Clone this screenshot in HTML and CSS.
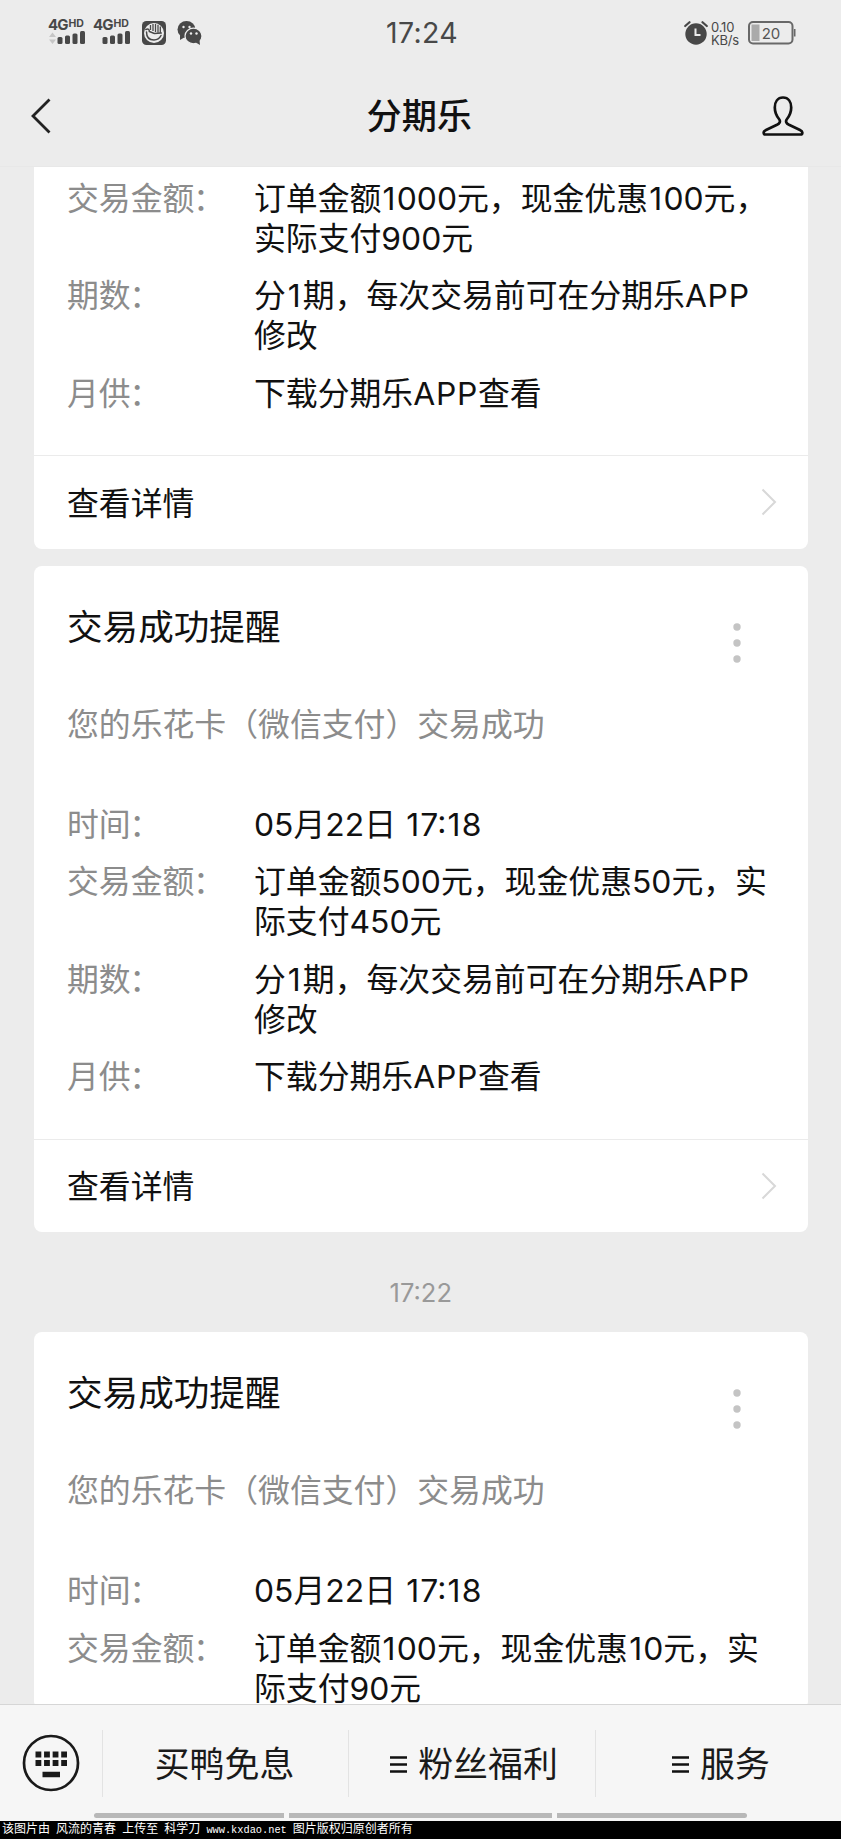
FILE: index.html
```
<!DOCTYPE html>
<html lang="zh-CN">
<head>
<meta charset="utf-8">
<title>分期乐</title>
<link rel="stylesheet" href="styles.css">
</head>
<body>
<div class="screen">
  <header class="statusbar">
    <div class="status-left">
      <div class="signal">
        <div class="net">4G<span class="hd">HD</span></div>
        <svg width="38" height="14" viewBox="0 0 38 14"><path d="M1 6l3.500-4.500L8 6zM1 8.500h7L4.500 13z" fill="#c6c6c6"/><g fill="#484848"><rect x="9.500" y="6" width="5" height="7" rx="1.500"/><rect x="17" y="4.500" width="5" height="8.500" rx="1.500"/><rect x="24.500" y="2.500" width="5" height="10.500" rx="1.500"/><rect x="32" y="0" width="5" height="13" rx="1.500"/></g></svg>
      </div>
      <div class="signal">
        <div class="net">4G<span class="hd">HD</span></div>
        <svg width="38" height="14" viewBox="0 0 38 14"><g fill="#484848"><rect x="9.500" y="6" width="5" height="7" rx="1.500"/><rect x="17" y="4.500" width="5" height="8.500" rx="1.500"/><rect x="24.500" y="2.500" width="5" height="10.500" rx="1.500"/><rect x="32" y="0" width="5" height="13" rx="1.500"/></g></svg>
      </div>
      <svg class="hand" width="24" height="24" viewBox="0 0 24 24"><rect width="24" height="24" rx="4.500" fill="#484848"/><circle cx="12" cy="12" r="10" fill="#ededed"/><path d="M8.500 4v5M11 3v7M13.500 3v8M16 3.800v8M18.300 5.500v6.500" stroke="#484848" stroke-width="1.300"/><path d="M3.800 8.500c2.500-1.200 3.700 0 3.500 2l5 2 7-.5M4.500 11c0 6 3.500 8 7.500 8 3.500 0 5.500-1.500 7-4.500" fill="none" stroke="#484848" stroke-width="1.500" stroke-linecap="round"/></svg>
      <svg class="wechat" width="26" height="24" viewBox="0 0 26 24"><g fill="#484848"><ellipse cx="9.500" cy="8.500" rx="9" ry="8.500"/><path d="M3 14v5l5-3z"/><ellipse cx="16.500" cy="15" rx="8.500" ry="7.800" stroke="#ededed" stroke-width="1.200"/><path d="M18 21l5 3-.5-5z"/></g><g fill="#ededed"><circle cx="6.500" cy="6" r="1.200"/><circle cx="12.500" cy="6" r="1.200"/><circle cx="14" cy="12.500" r="1.200"/><circle cx="19.500" cy="12.500" r="1.200"/></g></svg>
    </div>
    <div class="clock">17:24</div>
    <div class="status-right">
      <svg width="24" height="24" viewBox="0 0 24 24"><circle cx="12" cy="13" r="10.700" fill="#484848"/><path d="M1.200 5L5.500 1.200M22.800 5L18.500 1.200" stroke="#484848" stroke-width="2.200" stroke-linecap="round"/><path d="M11.500 7.500v6.500h5" fill="none" stroke="#ededed" stroke-width="2"/></svg>
      <div class="speed"><span>0.10</span><span>KB/s</span></div>
      <svg width="48" height="24" viewBox="0 0 48 24"><rect x="1" y="1" width="43.500" height="21.500" rx="4" fill="none" stroke="#686868" stroke-width="2"/><rect x="3.500" y="3.500" width="8" height="16.500" fill="#aaa"/><path d="M46.700 8v7.500" stroke="#686868" stroke-width="1.600"/><text x="23" y="17.500" text-anchor="middle" class="batt">20</text></svg>
    </div>
  </header>
  <nav class="navbar">
    <svg width="20" height="36" viewBox="0 0 20 36"><path d="M18.500 1.500L2 18l16.500 16.500" fill="none" stroke="#222" stroke-width="2.800"/></svg>
    <h1>分期乐</h1>
    <svg width="42" height="40" viewBox="0 0 42 40"><path d="M21 1.500C15.500 1.500 12.800 6 12.800 11.500c0 5 1.800 8.500 4.200 11.500 2 2.500.5 4.500-2 5.800L4 34c-2 1-2.500 2-2.300 3 .1.900.6 1.500 1.600 1.500h35.400c1 0 1.500-.6 1.600-1.500.2-1-.3-2-2.300-3l-11-5.200c-2.500-1.300-4-3.300-2-5.800 2.400-3 4.200-6.500 4.200-11.500 0-5.500-2.700-10-8.200-10z" fill="none" stroke="#111" stroke-width="2.700" stroke-linejoin="round"/></svg>
  </nav>
  <main class="chat">
    <section class="card card-cut">
      <dl class="rows">
        <div class="row"><dt>交易金额<span class="colon">：</span></dt><dd>订单金额<span class="one">1</span>000元，现金优惠<span class="one">1</span>00元，<br>实际支付900元</dd></div>
        <div class="row"><dt>期数<span class="colon">：</span></dt><dd>分<span class="one wide">1</span>期，每次交易前可在分期乐<span class="app">APP</span><br>修改</dd></div>
        <div class="row"><dt>月供<span class="colon">：</span></dt><dd>下载分期乐<span class="app">APP</span>查看</dd></div>
      </dl>
      <div class="more"><span>查看详情</span><svg width="16" height="28" viewBox="0 0 16 28"><path d="M1.500 1.500L14 14 1.500 26.500" fill="none" stroke="#d8d8d8" stroke-width="2"/></svg></div>
    </section>
    <section class="card">
      <div class="head"><h2>交易成功提醒</h2><svg width="8" height="42" viewBox="0 0 8 42"><g fill="#c4c4c4"><circle cx="4" cy="5" r="3.700"/><circle cx="4" cy="21" r="3.700"/><circle cx="4" cy="37" r="3.700"/></g></svg></div>
      <p class="sub">您的乐花卡（微信支付）交易成功</p>
      <dl class="rows">
        <div class="row"><dt>时间<span class="colon">：</span></dt><dd>05月22日 <span class="one">1</span>7:<span class="one">1</span>8</dd></div>
        <div class="row"><dt>交易金额<span class="colon">：</span></dt><dd>订单金额500元，现金优惠50元，实<br>际支付450元</dd></div>
        <div class="row"><dt>期数<span class="colon">：</span></dt><dd>分<span class="one wide">1</span>期，每次交易前可在分期乐<span class="app">APP</span><br>修改</dd></div>
        <div class="row"><dt>月供<span class="colon">：</span></dt><dd>下载分期乐<span class="app">APP</span>查看</dd></div>
      </dl>
      <div class="more"><span>查看详情</span><svg width="16" height="28" viewBox="0 0 16 28"><path d="M1.500 1.500L14 14 1.500 26.500" fill="none" stroke="#d8d8d8" stroke-width="2"/></svg></div>
    </section>
    <div class="stamp">17:22</div>
    <section class="card">
      <div class="head"><h2>交易成功提醒</h2><svg width="8" height="42" viewBox="0 0 8 42"><g fill="#c4c4c4"><circle cx="4" cy="5" r="3.700"/><circle cx="4" cy="21" r="3.700"/><circle cx="4" cy="37" r="3.700"/></g></svg></div>
      <p class="sub">您的乐花卡（微信支付）交易成功</p>
      <dl class="rows">
        <div class="row"><dt>时间<span class="colon">：</span></dt><dd>05月22日 <span class="one">1</span>7:<span class="one">1</span>8</dd></div>
        <div class="row"><dt>交易金额<span class="colon">：</span></dt><dd>订单金额<span class="one">1</span>00元，现金优惠<span class="one">1</span>0元，实<br>际支付90元</dd></div>
      </dl>
    </section>
  </main>
  <footer class="menu">
    <div class="tabs">
      <div class="kb"><svg width="58" height="58" viewBox="0 0 58 58"><circle cx="29" cy="29" r="27" fill="none" stroke="#1a1a1a" stroke-width="2.700"/><path d="M13.500 20.500H45M13.500 29H45" stroke="#1a1a1a" stroke-width="5.800" stroke-dasharray="5.800 2.770"/><path d="M20.500 40.500h17.500" stroke="#1a1a1a" stroke-width="5.500"/></svg></div>
      <div class="tab tab-a"><span>买鸭免息</span></div>
      <div class="tab tab-b"><svg width="17" height="17" viewBox="0 0 17 17"><path d="M0 1.500h17M0 8.500h17M0 15.500h17" stroke="#111" stroke-width="2.400"/></svg><span>粉丝福利</span></div>
      <div class="tab tab-c"><svg width="17" height="17" viewBox="0 0 17 17"><path d="M0 1.500h17M0 8.500h17M0 15.500h17" stroke="#111" stroke-width="2.400"/></svg><span>服务</span></div>
    </div>
    <div class="gestures"><i class="g-first"></i><i class="g-mid"></i><i class="g-last"></i></div>
  </footer>
  <div class="credit">该图片由 风流的青春 上传至 科学刀 <span class="url">www.kxdao.net</span> 图片版权归原创者所有</div>
</div>
</body>
</html>
```
FILE: styles.css
```
* { box-sizing: border-box; margin: 0; padding: 0; }
body { background: #ececec; font-family: Inter, "Noto Sans CJK SC", sans-serif; color: #111; }
svg { display: block; flex: none; }
.screen { width: 841px; height: 1839px; display: flex; flex-direction: column; overflow: hidden; white-space: nowrap; }

.statusbar { height: 66px; flex: none; display: grid; grid-template-columns: 1fr auto 1fr; padding: 0 45px 0 48px; color: #484848; }
.status-left { display: flex; align-items: flex-start; padding-top: 19px; }
.signal { width: 45px; }
.net { height: 12px; font-size: 15px; line-height: 12px; font-weight: 700; display: flex; align-items: flex-start; letter-spacing: -1px; }
.hd { font-size: 10.500px; line-height: 9px; letter-spacing: 0; margin-left: 1px; }
.hand { margin: 2px 0 0 4px; }
.wechat { margin: 2px 0 0 11px; }
.clock { font-size: 28.500px; line-height: 66px; width: 78px; text-align: center; letter-spacing: .3px; }
.status-right { display: flex; justify-content: flex-end; align-items: flex-start; padding-top: 21px; }
.status-right > svg:first-child { margin-right: -1px; }
.speed { width: 30px; margin: 0 7px 0 4px; display: flex; flex-direction: column; font-size: 13px; line-height: 13px; letter-spacing: -.2px; }
.batt { font-size: 15px; fill: #555; }

.navbar { height: 101px; flex: none; display: flex; justify-content: space-between; padding: 0 37.500px 0 31px; border-bottom: 1px solid #e8e8e8; align-items: center; }
.navbar h1 { font-size: 35.200px; font-weight: 500; line-height: 101px; margin-left: 26px; }

.chat { height: 1537px; flex: none; overflow: hidden; padding: 0 33px 0 33.500px; }
.card { background: #fff; border-radius: 8px; margin-bottom: 17px; }
.card-cut { border-radius: 0 0 8px 8px; padding-top: 12px; }
.rows { padding: 0 33.500px; display: grid; row-gap: 17.300px; }
.row { display: grid; grid-template-columns: 187px 1fr; font-size: 31.850px; line-height: 40px; }
.row dt { color: #8c8c8c; }
.colon { margin-left: -1.500px; }
.one { padding: 0 1.200px; }
.wide { padding: 0 2px; }
.app { letter-spacing: .7px; }
.more { margin-top: 42px; height: 93px; border-top: 1px solid #ebebeb; padding: 0 31px 0 33.500px; display: flex; align-items: center; justify-content: space-between; font-size: 31.850px; }
.card-cut .more { margin-top: 41px; height: 94px; }
.more span { padding-bottom: 3px; }
.head { display: flex; justify-content: space-between; padding: 40px 67.500px 0 33.500px; height: 102px; }
.head h2 { font-size: 35.600px; font-weight: 400; line-height: 44px; }
.head svg { margin-top: 16px; }
.sub { padding: 0 33.500px; height: 137.500px; line-height: 113px; font-size: 31.850px; color: #8c8c8c; }
.stamp { height: 100px; margin-top: -17px; line-height: 121px; text-align: center; font-size: 25.500px; color: #999; }

.menu { height: 117px; flex: none; background: #f6f6f6; border-top: 1px solid #d6d6d6; }
.tabs { height: 108px; padding-top: 25px; display: flex; align-items: flex-start; }
.kb { width: 102px; padding: 4px 0 0 22px; }
.tab { height: 67px; border-left: 1px solid #e3e3e3; display: flex; align-items: center; justify-content: center; gap: 11px; font-size: 34.900px; color: #1a1a1a; padding-top: 1px; }
.tab span { padding-bottom: 4px; }
.tab-a { width: 246px; padding-right: 2px; }
.tab-b { width: 247px; padding-left: 4px; }
.tab-c { width: 246px; padding-left: 5px; }
.gestures { display: flex; gap: 5px; padding-left: 94px; }
.gestures i { height: 5px; width: 190px; background: #b8b8b8; }
.gestures .g-first { border-radius: 3px 0 0 3px; }
.gestures .g-mid { width: 263px; }
.gestures .g-last { border-radius: 0 3px 3px 0; }

.credit { height: 18px; flex: none; background: #000; color: #fff; padding-left: 2px; font: 12px/18px "Liberation Mono", "Noto Sans CJK SC", monospace; word-spacing: -1.100px; }
.url { font-size: 10.300px; }
```
